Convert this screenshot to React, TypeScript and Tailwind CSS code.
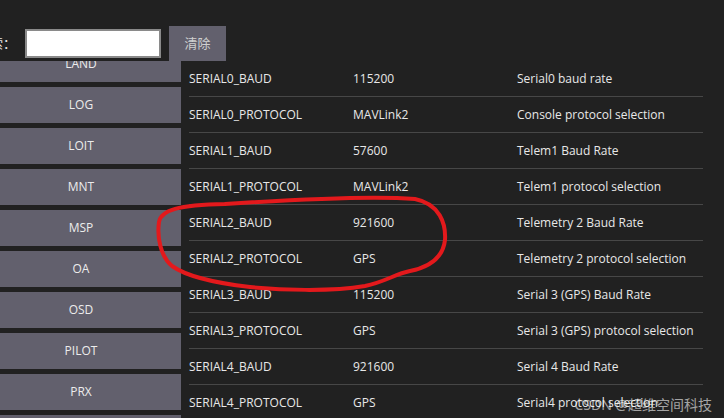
import React from "react";

const groups = ["LAND", "LOG", "LOIT", "MNT", "MSP", "OA", "OSD", "PILOT", "PRX", "RALLY"];

const rows: [string, string, string][] = [
  ["SERIAL0_BAUD", "115200", "Serial0 baud rate"],
  ["SERIAL0_PROTOCOL", "MAVLink2", "Console protocol selection"],
  ["SERIAL1_BAUD", "57600", "Telem1 Baud Rate"],
  ["SERIAL1_PROTOCOL", "MAVLink2", "Telem1 protocol selection"],
  ["SERIAL2_BAUD", "921600", "Telemetry 2 Baud Rate"],
  ["SERIAL2_PROTOCOL", "GPS", "Telemetry 2 protocol selection"],
  ["SERIAL3_BAUD", "115200", "Serial 3 (GPS) Baud Rate"],
  ["SERIAL3_PROTOCOL", "GPS", "Serial 3 (GPS) protocol selection"],
  ["SERIAL4_BAUD", "921600", "Serial 4 Baud Rate"],
  ["SERIAL4_PROTOCOL", "GPS", "Serial4 protocol selection"],
];

export default function App() {
  return (
    <div
      className="relative w-[724px] h-[418px] overflow-hidden bg-[#212121] text-[#e6e6e6]"
      style={{ fontFamily: '"Open Sans", "Noto Sans CJK SC", sans-serif' }}
    >
      {/* header */}
      <div className="flex items-center h-[61px] pt-[26px]">
        <span className="ml-[-23px] w-[40px] shrink-0 text-[13px] text-[#e6e6e6] whitespace-nowrap">搜索：</span>
        <div className="ml-[8px] w-[136px] h-[29px] bg-white border-2 border-[#8a8a8a]" />
        <div className="ml-[8px] w-[57px] h-[35px] bg-[#62606d] flex items-center justify-center text-[13px] text-[#d0d0d0]">
          清除
        </div>
      </div>

      {/* body */}
      <div className="flex h-[357px]">
        <div className="w-[181px] shrink-0 overflow-hidden">
          <div className="mt-[-15px] flex flex-col gap-[5px]">
            {groups.map((g) => (
              <div
                key={g}
                className="h-[36px] bg-[#62606d] flex items-center justify-center pr-[19px] text-[12px] text-[#ececec]"
              >
                {g}
              </div>
            ))}
          </div>
        </div>
        <div className="ml-[8px] w-[514px] flex flex-col">
          {rows.map(([n, v, d]) => (
            <div
              key={n}
              className="h-[36px] shrink-0 flex items-center border-b border-[#474747] text-[12px] text-[#e8e8e8] whitespace-nowrap"
            >
              <div className="w-[164px]">{n}</div>
              <div className="w-[164px]">{v}</div>
              <div>{d}</div>
            </div>
          ))}
        </div>
      </div>

      {/* red hand-drawn annotation */}
      <svg className="absolute left-0 top-0 pointer-events-none" width="724" height="418" viewBox="0 0 724 418">
        <path
          d="M 225 204 C 300 199, 380 196, 415 199 C 440 204, 446 224, 445 240 C 443 257, 430 267, 410 271 C 395 274, 385 282, 365 286 C 330 292, 280 290, 250 287 C 215 283, 186 276, 172 266 C 160 256, 157 236, 159 222 C 161 210, 178 205, 225 204"
          fill="none"
          stroke="#e3191c"
          strokeWidth="4"
          strokeLinecap="round"
          strokeLinejoin="round"
        />
      </svg>

      {/* watermark */}
      <div
        className="absolute right-[12px] bottom-[3px] text-[14px] leading-[20px] text-white/60 whitespace-nowrap"
        style={{ fontFamily: '"Noto Sans", "Noto Sans CJK SC", sans-serif' }}
      >
        CSDN @超维空间科技
      </div>
    </div>
  );
}
